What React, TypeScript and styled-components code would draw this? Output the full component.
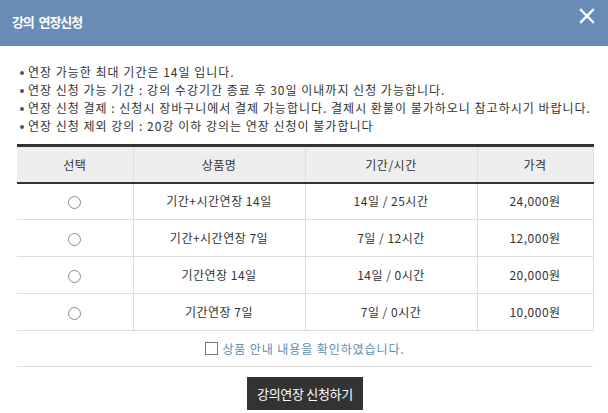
import React from "react";
import styled, { createGlobalStyle } from "styled-components";

const Global = createGlobalStyle`
  html, body { margin: 0; padding: 0; background: #fff; }
  body { font-family: "Noto Sans CJK KR", "Noto Sans", sans-serif; color: #333; }
  * { box-sizing: border-box; }
`;

const Page = styled.div`
  width: 608px;
  height: 413px;
  overflow: hidden;
  background: #fff;
`;

const Header = styled.header`
  height: 46px;
  background: #688cb6;
  display: flex;
  align-items: center;
  justify-content: space-between;
  padding: 0 13px 0 12px;
`;

const Title = styled.h1`
  margin: 0;
  font-size: 13px;
  font-weight: 700;
  color: #fff;
  letter-spacing: -1.1px;
  word-spacing: 3px;
  margin-top: -4px;
`;

const CloseButton = styled.button`
  border: 0;
  background: transparent;
  padding: 0;
  width: 16px;
  height: 16px;
  display: flex;
  margin-top: -14px;
  cursor: pointer;
`;

const Body = styled.div`
  padding: 17px 15px 0 17px;
`;

const Notes = styled.ul`
  margin: 0;
  padding: 0;
  list-style: none;
`;

const Note = styled.li`
  position: relative;
  padding-left: 11px;
  font-size: 12px;
  line-height: 18px;
  color: #333;
  letter-spacing: 1px;
  white-space: nowrap;
  &::before {
    content: "";
    position: absolute;
    left: 3px;
    top: 8px;
    width: 4px;
    height: 4px;
    border-radius: 50%;
    background: #555;
  }
`;

const Table = styled.table`
  width: 576px;
  margin-top: 9px;
  border-collapse: collapse;
  table-layout: fixed;
  border-top: 3px solid #333;
`;

const Th = styled.th<{ $w: number }>`
  width: ${(p) => p.$w}px;
  height: 37px;
  background: #eee;
  font-size: 12px;
  font-weight: 400;
  color: #333;
  letter-spacing: 0.5px;
  border-bottom: 2px solid #333;
  border-left: 1px solid #ddd;
  border-right: 1px solid #ddd;
  &:first-child { border-left: 0; }
`;

const Td = styled.td`
  height: 37px;
  padding-bottom: 3px;
  text-align: center;
  font-size: 12px;
  color: #333;
  letter-spacing: 0.5px;
  border-bottom: 1px solid #ddd;
  border-left: 1px solid #ddd;
  border-right: 1px solid #ddd;
  &:first-child { border-left: 0; }
`;

const Radio = styled.span`
  display: inline-block;
  width: 13px;
  height: 13px;
  border-radius: 50%;
  border: 1px solid #8a8a8a;
  background: #fff;
  vertical-align: middle;
`;

const Agree = styled.label`
  height: 36px;
  display: flex;
  align-items: center;
  justify-content: center;
  gap: 4px;
  border-bottom: 1px solid #ddd;
  font-size: 12px;
  color: #5b8db3;
  letter-spacing: 0.9px;
  width: 576px;
`;

const Box = styled.span`
  width: 13px;
  height: 13px;
  border: 1.5px solid #777;
  background: #fff;
  display: inline-block;
`;

const Actions = styled.div`
  width: 576px;
  display: flex;
  justify-content: center;
  padding-top: 10px;
`;

const Submit = styled.button`
  width: 116px;
  height: 33px;
  border: 0;
  background: #333;
  color: #fff;
  font-family: "Noto Sans CJK KR", sans-serif;
  font-size: 13px;
  letter-spacing: -0.3px;
  padding: 0;
`;

const rows = [
  { name: "기간+시간연장 14일", period: "14일 / 25시간", price: "24,000원" },
  { name: "기간+시간연장 7일", period: "7일 / 12시간", price: "12,000원" },
  { name: "기간연장 14일", period: "14일 / 0시간", price: "20,000원" },
  { name: "기간연장 7일", period: "7일 / 0시간", price: "10,000원" },
];

export default function App() {
  return (
    <Page>
      <Global />
      <Header>
        <Title>강의 연장신청</Title>
        <CloseButton aria-label="닫기">
          <svg width="16" height="16" viewBox="0 0 16 16">
            <path d="M2 2 L14 14 M14 2 L2 14" stroke="#fff" strokeWidth="2.4" strokeLinecap="square" />
          </svg>
        </CloseButton>
      </Header>
      <Body>
        <Notes>
          <Note>연장 가능한 최대 기간은 14일 입니다.</Note>
          <Note>연장 신청 가능 기간 : 강의 수강기간 종료 후 30일 이내까지 신청 가능합니다.</Note>
          <Note>연장 신청 결제 : 신청시 장바구니에서 결제 가능합니다. 결제시 환불이 불가하오니 참고하시기 바랍니다.</Note>
          <Note>연장 신청 제외 강의 : 20강 이하 강의는 연장 신청이 불가합니다</Note>
        </Notes>
        <Table>
          <thead>
            <tr>
              <Th $w={116}>선택</Th>
              <Th $w={172}>상품명</Th>
              <Th $w={172}>기간/시간</Th>
              <Th $w={116}>가격</Th>
            </tr>
          </thead>
          <tbody>
            {rows.map((r) => (
              <tr key={r.name}>
                <Td><Radio /></Td>
                <Td>{r.name}</Td>
                <Td>{r.period}</Td>
                <Td>{r.price}</Td>
              </tr>
            ))}
          </tbody>
        </Table>
        <Agree>
          <Box />
          상품 안내 내용을 확인하였습니다.
        </Agree>
        <Actions>
          <Submit>강의연장 신청하기</Submit>
        </Actions>
      </Body>
    </Page>
  );
}
